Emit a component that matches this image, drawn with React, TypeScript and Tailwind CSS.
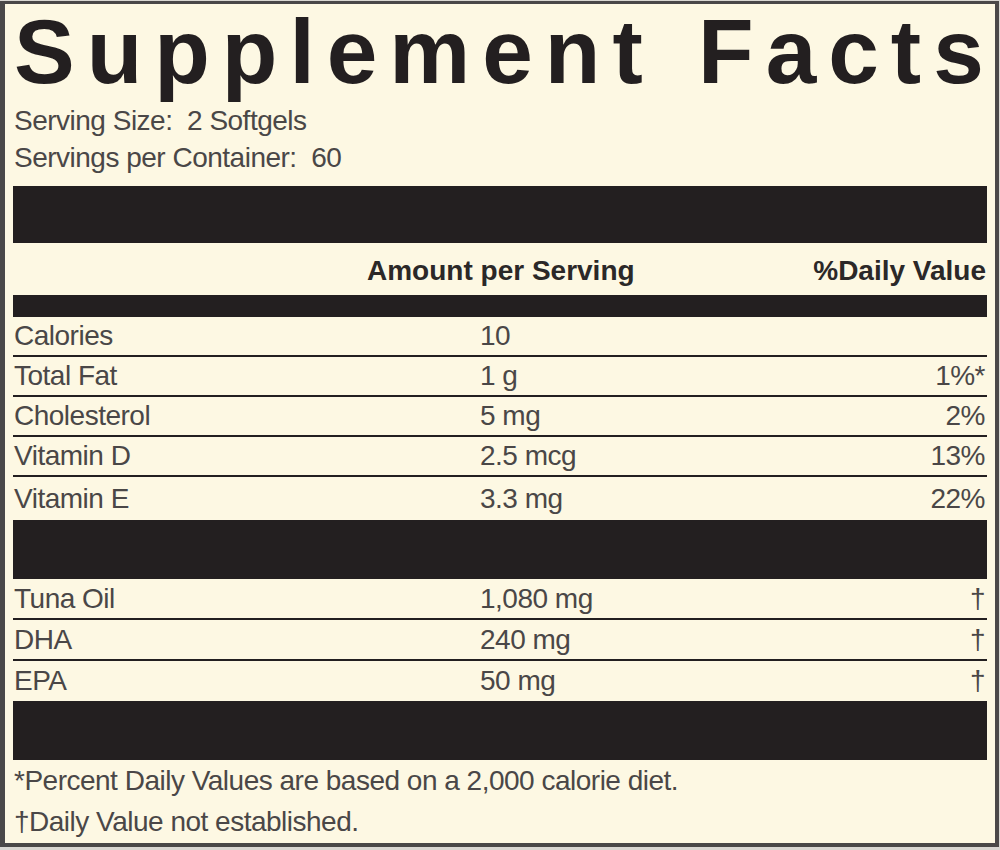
import React from "react";

type Row = { name: string; amount: string; dv: string };

const vitamins: Row[] = [
  { name: "Calories", amount: "10", dv: "" },
  { name: "Total Fat", amount: "1 g", dv: "1%*" },
  { name: "Cholesterol", amount: "5 mg", dv: "2%" },
  { name: "Vitamin D", amount: "2.5 mcg", dv: "13%" },
  { name: "Vitamin E", amount: "3.3 mg", dv: "22%" },
];

const oils: Row[] = [
  { name: "Tuna Oil", amount: "1,080 mg", dv: "†" },
  { name: "DHA", amount: "240 mg", dv: "†" },
  { name: "EPA", amount: "50 mg", dv: "†" },
];

const sans = "font-['Liberation_Sans',Arial,sans-serif]";
const body = "text-[28px] leading-none text-[#4a4747] tracking-[-0.5px]";

const FactRow = ({ row, last, height }: { row: Row; last: boolean; height: string }) => (
  <div className={`flex items-center ${height} ${last ? "" : "border-b-2 border-[#231f20]"} ${body}`}>
    <span className="w-[467px] pl-[1px]">{row.name}</span>
    <span className="flex-1">{row.amount}</span>
    <span className="pr-[2px]">{row.dv}</span>
  </div>
);

const App = () => {
  return (
    <div className="w-[1000px] h-[850px] bg-[#d9d7d2] pt-[1px]">
      <div
        className={`w-[999px] h-[846px] bg-[#fdf8e3] border-l-[5px] border-t-[3px] border-r-[4px] border-b-[4px] border-[#4a4848] px-[8px] flex flex-col ${sans}`}
      >
        <div className="h-[97px] pt-[2px]">
          <h1 className="font-bold text-[91px] leading-none text-[#231f20] tracking-[12px] [word-spacing:6px] whitespace-nowrap pl-[1px]">
            Supplement Fact<span className="tracking-normal">s</span>
          </h1>
        </div>

        <div className={`${body} whitespace-pre pl-[1px]`}>
          <div className="h-[37px] flex items-center pt-[2px]">Serving Size:  2 Softgels</div>
          <div className="h-[37px] flex items-center pt-[2px]">Servings per Container:  60</div>
        </div>

        <div className="mt-[11px] h-[57px] bg-[#231f20]" />

        <div className="h-[52px] flex items-center pt-[4px] font-bold text-[28px] leading-none text-[#2b2828]">
          <span className="pl-[354px]">Amount per Serving</span>
          <span className="ml-auto pr-[1px]">%Daily Value</span>
        </div>

        <div className="h-[22px] bg-[#231f20]" />

        {vitamins.map((r, i) => (
          <FactRow
            key={r.name}
            row={r}
            last={i === vitamins.length - 1}
            height={i === vitamins.length - 1 ? "h-[43px]" : "h-[40px]"}
          />
        ))}

        <div className="h-[59px] bg-[#231f20]" />

        {oils.map((r, i) => (
          <FactRow key={r.name} row={r} last={i === oils.length - 1} height={i === oils.length - 1 ? "h-[40px]" : "h-[41px]"} />
        ))}

        <div className="h-[59px] bg-[#231f20]" />

        <div className={`${body} pl-[1px]`}>
          <div className="h-[40px] flex items-center pt-[1px]">*Percent Daily Values are based on a 2,000 calorie diet.</div>
          <div className="h-[40px] flex items-center pt-[3px]">†Daily Value not established.</div>
        </div>
      </div>
    </div>
  );
};

export default App;
